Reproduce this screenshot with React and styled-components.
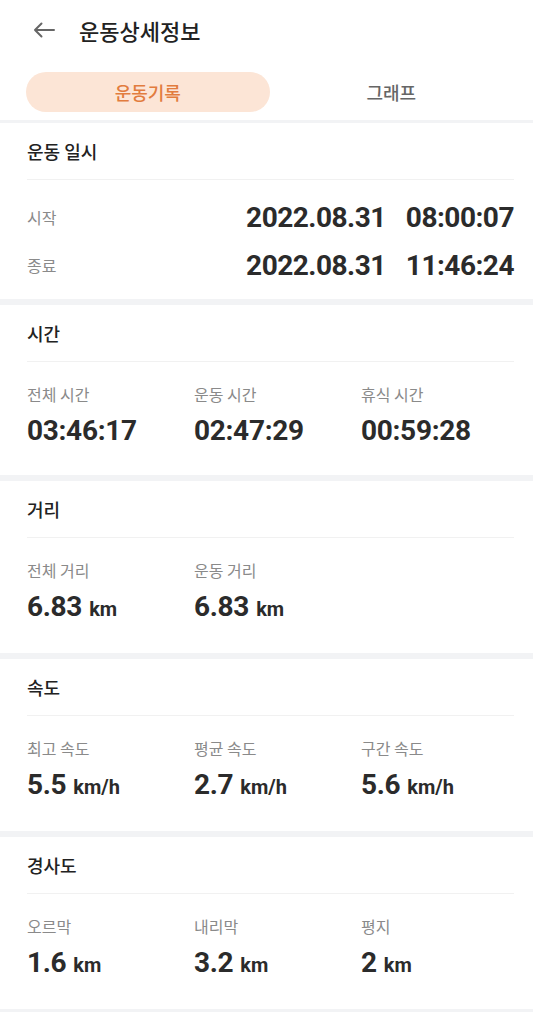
import styled, { createGlobalStyle } from 'styled-components';

const GlobalStyle = createGlobalStyle`
  html, body {
    margin: 0;
    padding: 0;
    background: #ffffff;
  }
  body {
    font-family: "Noto Sans CJK KR", "Noto Sans", sans-serif;
    color: #222;
  }
`;

const Page = styled.div`
  width: 533px;
  background: #fff;
`;

const Header = styled.div`
  display: flex;
  align-items: center;
  height: 60px;
  padding-left: 33px;
`;

const BackButton = styled.div`
  display: flex;
  width: 22px;
  height: 16px;
  margin-right: 24px;
`;

const Title = styled.h1`
  margin: 0;
  font-size: 22px;
  font-weight: 500;
  color: #222;
`;

const Tabs = styled.div`
  display: grid;
  grid-template-columns: 1fr 1fr;
  padding: 12px 20px 8px 26px;
`;

const Tab = styled.div`
  height: 40px;
  display: flex;
  align-items: center;
  justify-content: center;
  border-radius: 20px;
  font-size: 18px;
  font-weight: 500;
  background: ${p => (p.$active ? '#fce5d6' : 'transparent')};
  color: ${p => (p.$active ? '#e27c3e' : '#666')};
`;

const Band = styled.div`
  height: ${p => p.$h}px;
  background: #f2f3f5;
`;

const Section = styled.section`
  padding: 0 19px 0 27px;
`;

const SectionTitle = styled.div`
  height: 56px;
  line-height: 56px;
  font-size: 18px;
  font-weight: 500;
  color: #222;
  border-bottom: 1px solid #f1f1f1;
`;

const DateList = styled.div`
  padding: 13px 0 10px;
`;

const DateRow = styled.div`
  display: flex;
  align-items: center;
  justify-content: space-between;
  height: 48px;
`;

const Label = styled.div`
  font-size: 16px;
  line-height: 20px;
  color: #8a8a8a;
`;

const DateValue = styled.div`
  display: flex;
  gap: 20px;
  font-family: Roboto, "Liberation Sans", sans-serif;
  font-weight: 700;
  font-size: 28px;
  letter-spacing: -0.5px;
  color: #2b2b2b;
`;

const StatGrid = styled.div`
  display: grid;
  grid-template-columns: 167px 167px 1fr;
  padding: 22px 0 27px;
`;

const Stat = styled.div`
  display: flex;
  flex-direction: column;
  gap: 10px;
`;

const Value = styled.div`
  font-family: Roboto, "Liberation Sans", sans-serif;
  font-weight: 700;
  font-size: 28px;
  line-height: 34px;
  letter-spacing: -0.3px;
  color: #2b2b2b;
`;

const Unit = styled.span`
  font-size: 20px;
  margin-left: 7px;
  letter-spacing: 0;
`;

const BackArrow = () => (
  <svg width="22" height="16" viewBox="0 0 22 16" fill="none">
    <path d="M21 8H2M8.5 1.5L2 8l6.5 6.5" stroke="#666" strokeWidth="2" strokeLinecap="round" strokeLinejoin="round" />
  </svg>
);

const sections = [
  {
    title: '시간',
    stats: [
      { label: '전체 시간', value: '03:46:17' },
      { label: '운동 시간', value: '02:47:29' },
      { label: '휴식 시간', value: '00:59:28' },
    ],
  },
  {
    title: '거리',
    stats: [
      { label: '전체 거리', value: '6.83', unit: 'km' },
      { label: '운동 거리', value: '6.83', unit: 'km' },
    ],
  },
  {
    title: '속도',
    stats: [
      { label: '최고 속도', value: '5.5', unit: 'km/h' },
      { label: '평균 속도', value: '2.7', unit: 'km/h' },
      { label: '구간 속도', value: '5.6', unit: 'km/h' },
    ],
  },
  {
    title: '경사도',
    stats: [
      { label: '오르막', value: '1.6', unit: 'km' },
      { label: '내리막', value: '3.2', unit: 'km' },
      { label: '평지', value: '2', unit: 'km' },
    ],
  },
];

const App = () => {
  return (
    <Page>
      <GlobalStyle />
      <Header>
        <BackButton>
          <BackArrow />
        </BackButton>
        <Title>운동상세정보</Title>
      </Header>
      <Tabs>
        <Tab $active>운동기록</Tab>
        <Tab>그래프</Tab>
      </Tabs>
      <Band $h={3} />

      <Section>
        <SectionTitle>운동 일시</SectionTitle>
        <DateList>
          <DateRow>
            <Label>시작</Label>
            <DateValue>
              <span>2022.08.31</span>
              <span>08:00:07</span>
            </DateValue>
          </DateRow>
          <DateRow>
            <Label>종료</Label>
            <DateValue>
              <span>2022.08.31</span>
              <span>11:46:24</span>
            </DateValue>
          </DateRow>
        </DateList>
      </Section>

      {sections.map(s => (
        <div key={s.title}>
          <Band $h={6} />
          <Section>
            <SectionTitle>{s.title}</SectionTitle>
            <StatGrid>
              {s.stats.map(st => (
                <Stat key={st.label}>
                  <Label>{st.label}</Label>
                  <Value>
                    {st.value}
                    {st.unit && <Unit>{st.unit}</Unit>}
                  </Value>
                </Stat>
              ))}
            </StatGrid>
          </Section>
        </div>
      ))}
      <Band $h={6} />
    </Page>
  );
};

export default App;
